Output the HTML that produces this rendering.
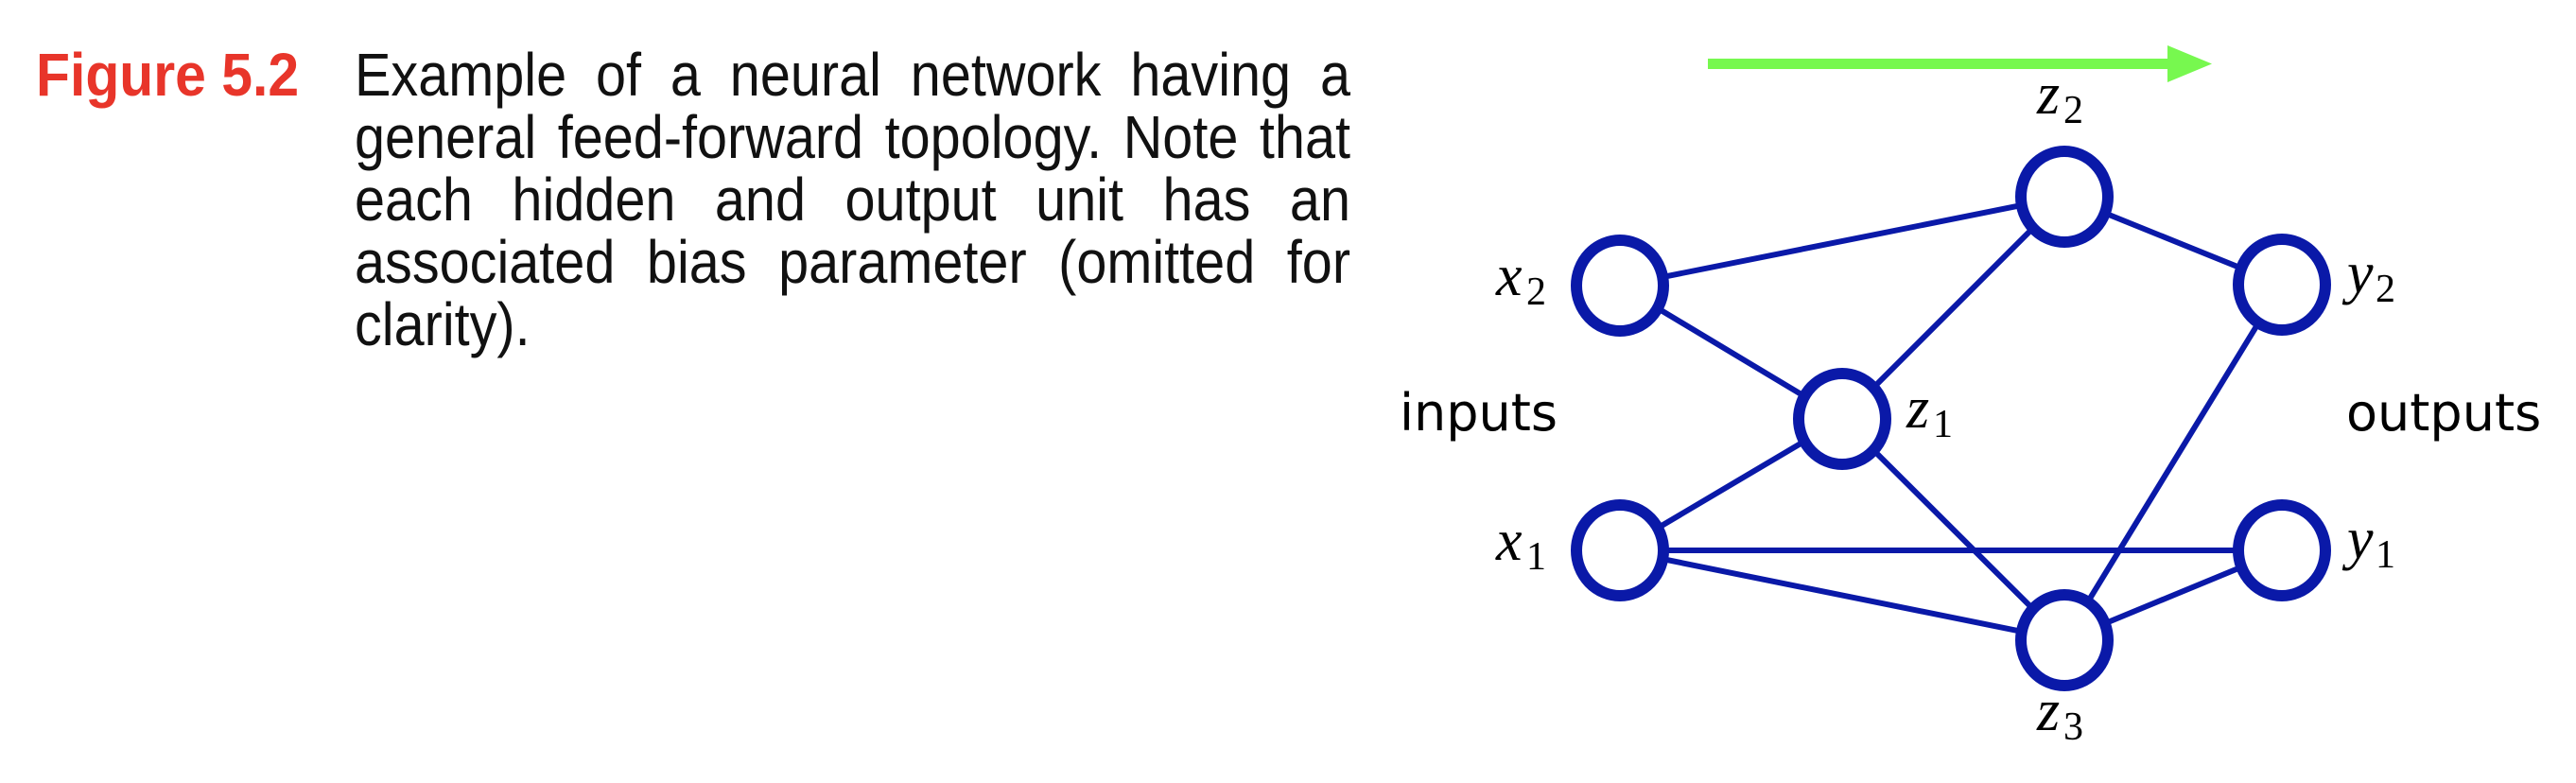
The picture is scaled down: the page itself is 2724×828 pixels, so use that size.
<!DOCTYPE html>
<html><head><meta charset="utf-8"><style>
html,body{margin:0;padding:0;background:#fff;}
body{width:2724px;height:828px;position:relative;overflow:hidden;}
.fig{position:absolute;left:38px;top:46px;font-family:"Liberation Sans",sans-serif;font-weight:bold;color:#e8352a;font-size:64px;line-height:66px;transform:scaleX(0.92);transform-origin:0 0;white-space:nowrap;}
.cap{position:absolute;left:375px;top:46px;width:1170px;font-family:"Liberation Sans",sans-serif;font-size:64px;line-height:66px;color:#111;transform:scaleX(0.9);transform-origin:0 0;}
.cap div{text-align:justify;text-align-last:justify;white-space:nowrap;}
.cap div.l{text-align-last:left;}
svg{position:absolute;left:0;top:0;}
</style></head><body>
<div class="fig">Figure 5.2</div>
<div class="cap">
<div>Example of a neural network having a</div>
<div>general feed-forward topology. Note that</div>
<div>each hidden and output unit has an</div>
<div>associated bias parameter (omitted for</div>
<div class="l">clarity).</div>
</div>
<svg width="2724" height="828" viewBox="0 0 2724 828">
<rect x="1806" y="62" width="490" height="11" fill="#77f84f"/>
<polygon points="2292,48 2339,67.5 2292,87" fill="#77f84f"/>
<g stroke="#0a19a8" stroke-width="6" fill="none">
<line x1="1713" y1="302" x2="2183" y2="208"/>
<line x1="1713" y1="302" x2="1948" y2="443"/>
<line x1="1948" y1="443" x2="2183" y2="208"/>
<line x1="2183" y1="208" x2="2413" y2="301"/>
<line x1="1713" y1="582" x2="1948" y2="443"/>
<line x1="1713" y1="582" x2="2413" y2="582"/>
<line x1="1713" y1="582" x2="2183" y2="677"/>
<line x1="1948" y1="443" x2="2183" y2="677"/>
<line x1="2183" y1="677" x2="2413" y2="301"/>
<line x1="2183" y1="677" x2="2413" y2="582"/>
</g>
<g stroke="#0a19a8" stroke-width="12" fill="#fff">
<ellipse cx="1713" cy="302" rx="46" ry="48"/>
<ellipse cx="1713" cy="582" rx="46" ry="48"/>
<ellipse cx="1948" cy="443" rx="46" ry="48"/>
<ellipse cx="2183" cy="208" rx="46" ry="48"/>
<ellipse cx="2183" cy="677" rx="46" ry="48"/>
<ellipse cx="2413" cy="301" rx="46" ry="48"/>
<ellipse cx="2413" cy="582" rx="46" ry="48"/>
</g>
<g font-family="Liberation Serif,serif" fill="#000">
<text x="1582" y="312" font-size="62" font-style="italic">x</text><text x="1614" y="322" font-size="42">2</text>
<text x="1582" y="592" font-size="62" font-style="italic">x</text><text x="1614" y="602" font-size="42">1</text>
<text x="2016" y="452" font-size="62" font-style="italic">z</text><text x="2044" y="462" font-size="42">1</text>
<text x="2154" y="120" font-size="62" font-style="italic">z</text><text x="2182" y="130" font-size="42">2</text>
<text x="2154" y="772" font-size="62" font-style="italic">z</text><text x="2182" y="782" font-size="42">3</text>
<text x="2482" y="309" font-size="62" font-style="italic">y</text><text x="2512" y="319" font-size="42">2</text>
<text x="2482" y="590" font-size="62" font-style="italic">y</text><text x="2512" y="600" font-size="42">1</text>
</g>
<g font-family="DejaVu Sans,sans-serif" font-size="54" fill="#000">
<text x="1480" y="455">inputs</text>
<text x="2481" y="455">outputs</text>
</g>
</svg>
</body></html>
